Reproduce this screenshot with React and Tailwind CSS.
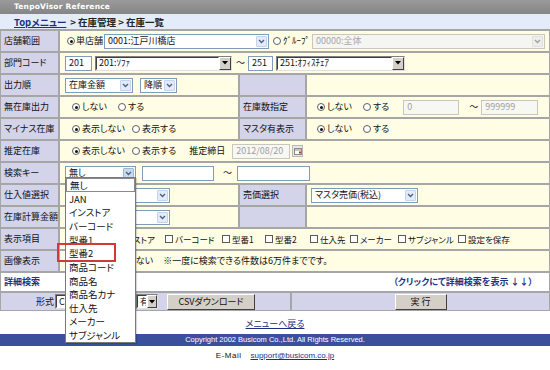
import React from "react";

const Chev = ({ color = "#4d6185" }) => (
  <svg width="7" height="5" viewBox="0 0 7 5">
    <path d="M1 1 L3.5 3.5 L6 1" fill="none" stroke={color} strokeWidth="1.4" />
  </svg>
);

function XSel({ w, text, disabled, pressed }) {
  return (
    <div
      className={`flex h-[15px] shrink-0 items-stretch border ${w} ${
        disabled ? "border-[#c9c7ba] bg-[#f5f5f1] text-[#a8a8a8]" : "border-[#7f9db9] bg-white text-[#111]"
      }`}
    >
      <span className="flex flex-1 items-center overflow-hidden whitespace-nowrap pl-[3px]">{text}</span>
      <span
        className={`my-[1px] mr-[1px] flex w-[11px] items-center justify-center rounded-[1px] border ${
          disabled
            ? "border-[#e0e0e0] bg-[#ededed]"
            : pressed
            ? "border-[#9eb5e0] bg-[#c9d8f5]"
            : "border-[#c4d3ee] bg-[#e4ebf8]"
        }`}
      >
        <Chev color={disabled ? "#a0a0a0" : "#4d6185"} />
      </span>
    </div>
  );
}

function CSel({ w, text, aw = "w-[12px]" }) {
  return (
    <div className={`flex h-[15px] shrink-0 items-stretch border border-t-[#808080] border-l-[#808080] border-b-[#e0e0e0] border-r-[#e0e0e0] bg-white ${w}`}>
      <span className="flex flex-1 items-center overflow-hidden whitespace-nowrap border border-t-[#404040] border-l-[#404040] border-b-white border-r-white pl-[2px] text-[#111]">
        {text}
      </span>
      <span className={`flex items-center justify-center border border-t-white border-l-white border-b-[#404040] border-r-[#404040] bg-[#d4d0c8] ${aw}`}>
        <svg width="6" height="4" viewBox="0 0 6 4">
          <path d="M0 0 L6 0 L3 3.5 Z" fill="#000" />
        </svg>
      </span>
    </div>
  );
}

function Inp({ w, text, disabled }) {
  return (
    <div
      className={`flex h-[15px] shrink-0 items-center border pl-[3px] ${w} ${
        disabled ? "border-[#c9c7ba] bg-[#f7f7f4] text-[#a0a0a0]" : "border-[#7f9db9] bg-white text-[#111]"
      }`}
    >
      {text}
    </div>
  );
}

const Radio = ({ checked }) => (
  <span className="relative inline-block h-[8px] w-[8px] shrink-0 rounded-full border border-[#5f5f5f] bg-white">
    {checked && <span className="absolute left-[1.5px] top-[1.5px] h-[3px] w-[3px] rounded-full bg-[#111]" />}
  </span>
);

const Check = () => <span className="inline-block h-[8px] w-[8px] shrink-0 border border-[#5a5a5a] bg-white" />;

const RL = ({ checked, children }) => (
  <span className="flex items-center gap-[2px] whitespace-nowrap">
    <Radio checked={checked} />
    <span>{children}</span>
  </span>
);

const CL = ({ w, children }) => (
  <span className={`flex shrink-0 items-center gap-[2px] whitespace-nowrap ${w}`}>
    <Check />
    <span>{children}</span>
  </span>
);

const L = ({ children }) => (
  <div className="flex items-center bg-[#d3d3ea] pl-[3px] whitespace-nowrap text-[#111]">{children}</div>
);

const V = ({ children, cls = "" }) => (
  <div className={`flex items-center bg-[#fffde4] whitespace-nowrap text-[#111] ${cls}`}>{children}</div>
);

const Btn = ({ w, children }) => (
  <div
    className={`flex h-[16px] items-center justify-center border border-t-white border-l-white border-b-[#404040] border-r-[#404040] bg-[#d4d0c8] text-[#111] ${w}`}
  >
    {children}
  </div>
);

export default function App() {
  const items = ["無し", "JAN", "インストア", "バーコード", "型番1", "型番2", "商品コード", "商品名", "商品名カナ", "仕入先", "メーカー", "サブジャンル"];
  return (
    <div className="relative h-[370px] w-[550px] overflow-hidden bg-white font-['Noto_Sans_CJK_JP','Noto_Sans',sans-serif] text-[9px] leading-[12px] [font-feature-settings:'palt']">
      {/* title */}
      <div className="flex h-[14px] items-center bg-gradient-to-b from-[#9a9a9a] to-[#858585] pl-[14px] font-['DejaVu_Sans',sans-serif] text-[7.5px] font-bold tracking-[0.2px] text-white">
        TenpoVisor Reference
      </div>
      {/* breadcrumb */}
      <div className="flex h-[15px] items-center gap-[4px] bg-[#e3ecf8] pl-[14px] text-[9.5px] font-bold text-[#222]">
        <span className="text-[#1b2f86] underline">Topメニュー</span>
        <span>&gt; 在庫管理 &gt; 在庫一覧</span>
      </div>

      {/* main table */}
      <div className="grid grid-cols-[57px_178px_65px_1fr] grid-rows-[repeat(11,20px)_18px_17px] gap-[2px] bg-[#a6a6a6] px-[1px] pb-[1px] pt-[2px]">
        {/* 店舗範囲 */}
        <L>店舗範囲</L>
        <V cls="col-span-3 pl-[7px]">
          <span className="flex items-center gap-[1px]">
            <Radio checked />
            <span>単店舗</span>
          </span>
          <span className="ml-[1px]">
            <XSel w="w-[165px]" text="0001:江戸川橋店" />
          </span>
          <span className="ml-[4px] flex items-center gap-[2px]">
            <Radio />
            <span>ｸﾞﾙｰﾌﾟ</span>
          </span>
          <span className="ml-[2px]">
            <XSel w="w-[233px]" text="00000:全体" disabled />
          </span>
        </V>

        {/* 部門コード */}
        <L>部門コード</L>
        <V cls="col-span-3 pl-[5px]">
          <Inp w="w-[27px]" text="201" />
          <span className="ml-[3px]">
            <CSel w="w-[137px]" text="201:ｿﾌｧ" />
          </span>
          <span className="ml-[4px] mr-[3px]">〜</span>
          <Inp w="w-[25px]" text="251" />
          <span className="ml-[3px]">
            <CSel w="w-[129px]" text="251:ｵﾌｨｽﾁｪｱ" />
          </span>
        </V>

        {/* 出力順 */}
        <L>出力順</L>
        <V cls="pl-[5px] gap-[7px]">
          <XSel w="w-[68px]" text="在庫金額" />
          <XSel w="w-[37px]" text="降順" />
        </V>
        <L></L>
        <V></V>

        {/* 無在庫出力 */}
        <L>無在庫出力</L>
        <V cls="pl-[12px] gap-[11px]">
          <RL checked>しない</RL>
          <RL>する</RL>
        </V>
        <L>在庫数指定</L>
        <V cls="pl-[10px]">
          <RL checked>しない</RL>
          <span className="ml-[11px]">
            <RL>する</RL>
          </span>
          <span className="ml-[14px]">
            <Inp w="w-[56px]" text="0" disabled />
          </span>
          <span className="ml-[10px] mr-[3px]">〜</span>
          <Inp w="w-[57px]" text="999999" disabled />
        </V>

        {/* マイナス在庫 */}
        <L>マイナス在庫</L>
        <V cls="pl-[12px] gap-[7px]">
          <RL checked>表示しない</RL>
          <RL>表示する</RL>
        </V>
        <L>マスタ有表示</L>
        <V cls="pl-[10px] gap-[11px]">
          <RL checked>しない</RL>
          <RL>する</RL>
        </V>

        {/* 推定在庫 */}
        <L>推定在庫</L>
        <V cls="col-span-3 pl-[12px]">
          <RL checked>表示しない</RL>
          <span className="ml-[7px]">
            <RL>表示する</RL>
          </span>
          <span className="ml-[13px]">推定締日</span>
          <span className="ml-[7px]">
            <Inp w="w-[58px]" text="2012/08/20" disabled />
          </span>
          <span className="ml-[2px] flex h-[12px] w-[11px] items-center justify-center border border-[#b8b8b8] bg-[#e8e8e8]">
            <svg width="8" height="8" viewBox="0 0 8 8">
              <rect x="0.5" y="1.5" width="7" height="6" fill="#fff" stroke="#8a8a8a" />
              <line x1="0.5" y1="3" x2="7.5" y2="3" stroke="#8a8a8a" />
              <rect x="5" y="4.5" width="2" height="2" fill="#c03030" />
            </svg>
          </span>
        </V>

        {/* 検索キー */}
        <L>検索キー</L>
        <V cls="col-span-3 pl-[5px]">
          <XSel w="w-[71px]" text="無し" pressed />
          <span className="ml-[6px]">
            <Inp w="w-[72px]" text="" />
          </span>
          <span className="ml-[9px] mr-[5px]">〜</span>
          <Inp w="w-[73px]" text="" />
        </V>

        {/* 仕入値選択 */}
        <L>仕入値選択</L>
        <V cls="pl-[5px]">
          <XSel w="w-[105px]" text="最終仕入値" />
        </V>
        <L>売価選択</L>
        <V cls="pl-[4px]">
          <XSel w="w-[107px]" text="マスタ売価(税込)" />
        </V>

        {/* 在庫計算金額 */}
        <L>在庫計算金額</L>
        <V cls="pl-[5px]">
          <XSel w="w-[105px]" text="売価" />
        </V>
        <L></L>
        <V></V>

        {/* 表示項目 */}
        <L>表示項目</L>
        <V cls="col-span-3 pl-[7px] text-[8.5px]">
          <CL w="w-[41px]">JAN</CL>
          <CL w="w-[57px]">インストア</CL>
          <CL w="w-[57px]">バーコード</CL>
          <CL w="w-[43px]">型番1</CL>
          <CL w="w-[45px]">型番2</CL>
          <CL w="w-[40px]">仕入先</CL>
          <CL w="w-[48px]">メーカー</CL>
          <CL w="w-[60px]">サブジャンル</CL>
          <CL>設定を保存</CL>
        </V>

        {/* 画像表示 */}
        <L>画像表示</L>
        <V cls="col-span-3 pl-[12px]">
          <RL checked>表示する</RL>
          <span className="ml-[2px]">
            <RL>しない</RL>
          </span>
          <span className="ml-[10px]">※一度に検索できる件数は6万件までです。</span>
        </V>

        {/* 詳細検索 */}
        <div className="col-span-4 flex items-center justify-between bg-white pl-[3px] pr-[16px] font-bold text-[#1d3580]">
          <span>詳細検索</span>
          <span>（クリックにて詳細検索を表示 ↓↓）</span>
        </div>

        {/* 形式 */}
        <div className="col-span-4 grid grid-cols-[289px_1fr] gap-[2px]">
          <div className="flex items-center justify-center bg-[#d3d3ea] text-[#111]">
            <span>形式</span>
            <span className="ml-[1px]">
              <CSel w="w-[75px]" text="CSV" />
            </span>
            <span className="ml-[6px]">
              <CSel w="w-[22px]" text="有" aw="w-[10px]" />
            </span>
            <span className="ml-[9px]">
              <Btn w="w-[88px]">CSVダウンロード</Btn>
            </span>
          </div>
          <div className="flex items-center justify-center bg-[#d3d3ea]">
            <Btn w="w-[52px]">実 行</Btn>
          </div>
        </div>
      </div>

      {/* footer */}
      <div className="mt-[7px] flex h-[12px] items-center justify-center">
        <span className="text-[#1b2f86] underline">メニューへ戻る</span>
      </div>
      <div className="mt-[4px] flex h-[12px] items-center justify-center bg-[#3b4f9e] font-['Liberation_Sans',sans-serif] text-[7.5px] text-white">
        Copyright 2002 Busicom Co.,Ltd. All Rights Reserved.
      </div>
      <div className="mt-[4px] flex h-[12px] items-center justify-center gap-[9px] font-['Liberation_Sans',sans-serif] text-[8px] text-[#111]">
        <span className="tracking-[0.5px]">E-Mail</span>
        <span className="text-[#1b2f86] underline">support@busicom.co.jp</span>
      </div>

      {/* open dropdown list */}
      <div className="absolute left-[65px] top-[177px] flex h-[166px] w-[71px] flex-col border border-[#7a7a7a] bg-white shadow-[1px_1px_1px_rgba(0,0,0,0.15)]">
        {items.map((t, i) => (
          <div
            key={t}
            className={`flex h-[13.75px] items-center pl-[3px] text-[9.5px] text-[#111] ${i === 0 ? "border border-[#8a8a8a] pl-[2px]" : ""}`}
          >
            {t}
          </div>
        ))}
      </div>

      {/* red highlight */}
      <div className="absolute left-[57px] top-[243px] h-[19px] w-[59px] border-2 border-[#d23a3a]" />
    </div>
  );
}
